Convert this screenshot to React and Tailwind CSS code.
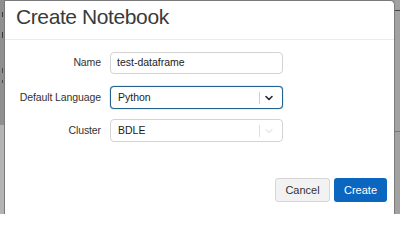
import { ChevronDown } from 'lucide-react';

const font = { fontFamily: '"Liberation Sans", Arial, sans-serif' };

function Row({ label, children, className = '' }) {
  return (
    <div className={`flex items-center ${className}`}>
      <div className="w-[97px] pr-[1px] text-right text-[10.5px] tracking-[-0.1px] text-[#333]">{label}</div>
      <div className="ml-[8px] w-[173px]">{children}</div>
    </div>
  );
}

function SelectBox({ value, focused }) {
  return (
    <div
      className={`flex h-[23px] items-center rounded-[4px] bg-white pl-[7px] pr-[4px] ${
        focused
          ? 'border-[1.5px] border-[#24618f] shadow-[0_0_1px_#24618f]'
          : 'border border-[#d3d3d3]'
      }`}
    >
      <span className="flex-1 text-[10.5px] text-[#222]">{value}</span>
      <span className={`h-[12px] w-px ${focused ? 'bg-[#cfcfcf]' : 'bg-[#dedede]'}`} />
      <span className="flex w-[18px] justify-center">
        {focused ? (
          <ChevronDown size={12} strokeWidth={3.2} color="#2a2a2a" />
        ) : (
          <ChevronDown size={12} strokeWidth={1.5} color="#c4c4c4" />
        )}
      </span>
    </div>
  );
}

export default function App() {
  return (
    <div className="flex h-[214px] w-[400px] overflow-hidden bg-[#9a9a9a]" style={font}>
      {/* page behind the overlay, left */}
      <div className="flex w-[4px] flex-col">
        <div className="h-[125px] bg-[#8f8f8f] pl-[2px]">
          <div className="mt-[12px] h-[5px] w-[1px] bg-[#3a3a3a]" />
          <div className="mt-[15px] h-[6px] w-[1px] bg-[#3a3a3a]" />
          <div className="mt-[30px] h-[5px] w-[1px] bg-[#4a4a4a]" />
          <div className="mt-[7px] h-[3px] w-[1px] bg-[#4a4a4a]" />
        </div>
        <div className="flex-1 bg-[#b4b4b4]" />
      </div>

      {/* modal */}
      <div className="flex w-[391px] flex-col rounded-tr-[5px] border-l border-t border-r border-[#7a7a7a] bg-white">
        <div className="h-[39px] border-b border-[#ececec] pl-[11px] pt-[4px]">
          <h1 className="text-[21px] leading-[24px] tracking-[-0.4px] text-[#3a3a3a]">
            Create Notebook
          </h1>
        </div>

        <div className="pt-[12px]">
          <Row label="Name">
            <div className="flex h-[22px] items-center rounded-[4px] border border-[#d3d3d3] px-[6px] text-[10.5px] text-[#222]">
              test-dataframe
            </div>
          </Row>
          <Row label="Default Language" className="mt-[12px]">
            <SelectBox value="Python" focused />
          </Row>
          <Row label="Cluster" className="mt-[10px]">
            <SelectBox value="BDLE" />
          </Row>
        </div>

        <div className="mt-[36px] flex justify-end gap-[4px] pr-[7px]">
          <button
            type="button"
            className="h-[24px] w-[55px] rounded-[3px] border border-[#d6d6d6] bg-[#f2f2f2] text-[11px] text-[#333]"
          >
            Cancel
          </button>
          <button
            type="button"
            className="h-[24px] w-[53px] rounded-[3px] bg-[#0b66bf] text-[11px] text-white"
          >
            Create
          </button>
        </div>
      </div>

      {/* page behind the overlay, right */}
      <div className="flex w-[5px] flex-col bg-[#a2a2a2]">
        <div className="mt-[10px] h-px w-full bg-[#444]" />
        <div className="mt-[120px] h-px w-full bg-[#777]" />
      </div>
    </div>
  );
}
